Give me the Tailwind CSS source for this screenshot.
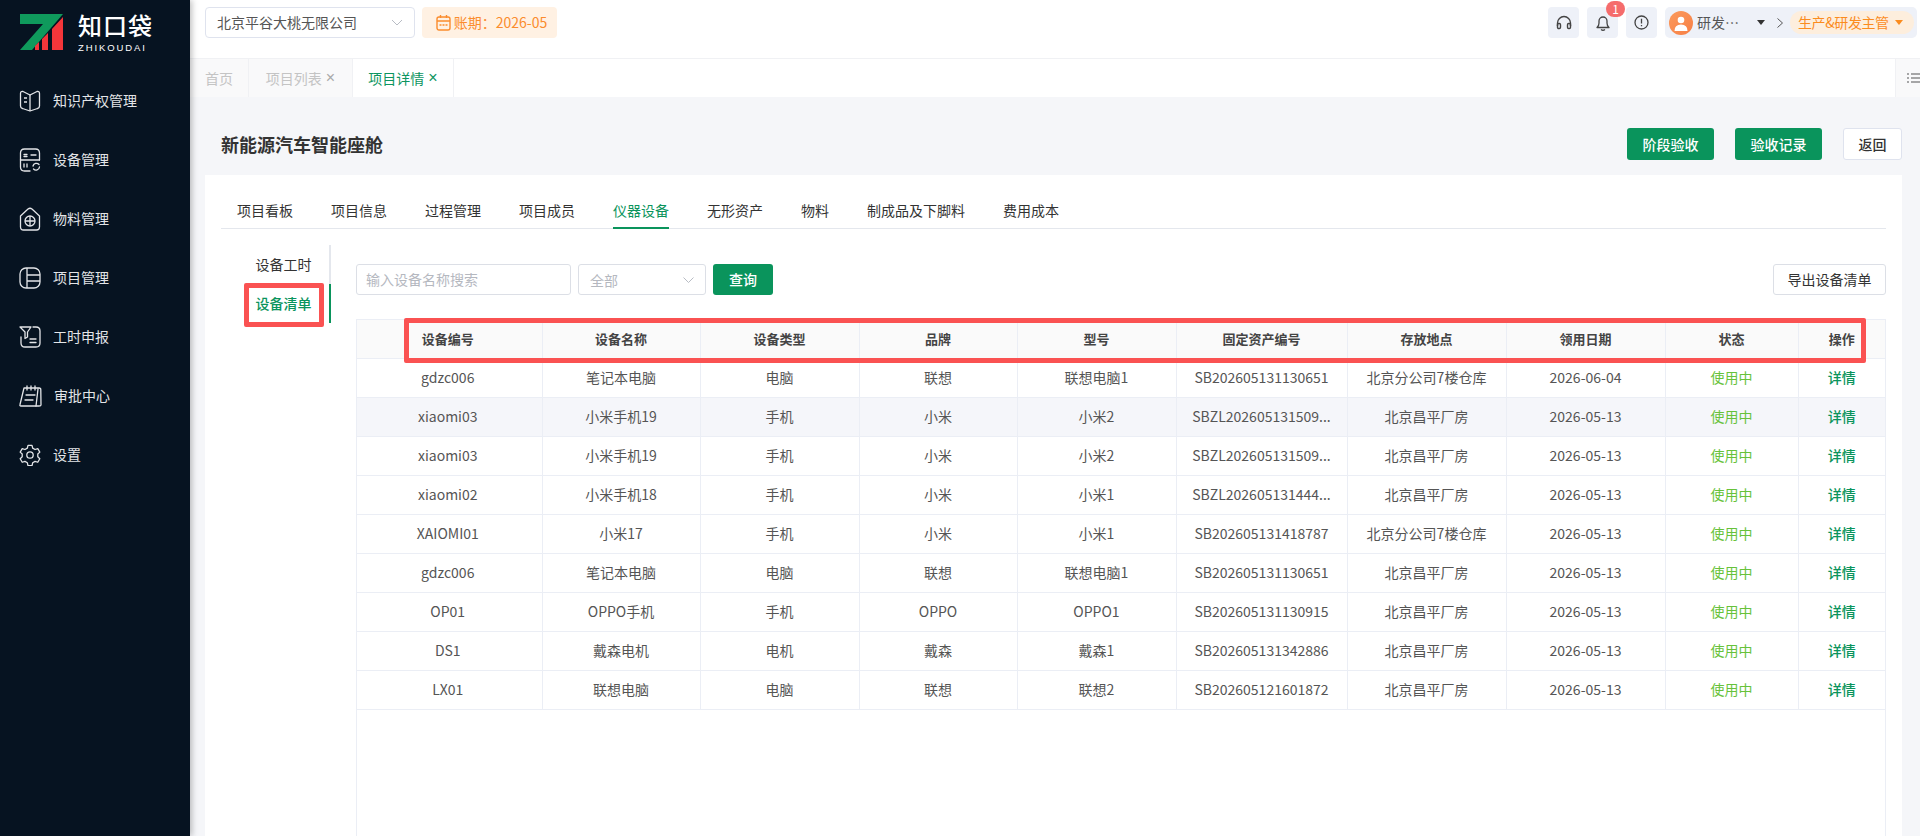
<!DOCTYPE html>
<html lang="en">
<head>
    <meta charset="UTF-8">
    <title>项目详情</title>
    <script src="https://cdn.jsdelivr.net/npm/@tailwindcss/browser@4"></script>
</head>
<body class="h-[836px] w-[1920px] overflow-hidden bg-white font-['Noto_Sans_CJK_SC',sans-serif] text-[14px] text-[#333]">
<div class="relative flex h-full">
    <!-- sidebar -->
    <aside class="z-10 flex h-full w-[190px] shrink-0 flex-col bg-[#061321] text-[14px] text-[#e3e5e8] shadow-[2px_0_6px_rgba(0,0,0,0.25)]">
        <div class="flex h-[58px] items-start pl-[20px] pt-[7px]">
            <svg width="43" height="36" viewBox="0 0 43 36" class="mt-[7px] shrink-0">
                <path d="M0 0H43L12 36H0L23 10H0Z" fill="#0f9a5c"/>
                <path d="M15 36V32L19 28V36ZM22 36V25L28 19V36ZM32 36V15L43 3V36Z" fill="#f4363a"/>
            </svg>
            <div class="ml-[15px] flex flex-col">
                <span class="h-[35px] text-[24px] leading-[35px] font-medium tracking-[1px] text-white">知口袋</span>
                <span class="text-[9.5px] leading-[11px] tracking-[1.9px] font-['Liberation_Sans'] text-white">ZHIKOUDAI</span>
            </div>
        </div>
        <nav class="mt-[13px] flex flex-col">
            <a class="flex h-[59px] items-center gap-[12px] pl-[19px]">
                <svg width="22" height="22" viewBox="0 0 22 22" fill="none" stroke="currentColor" stroke-width="1.3" stroke-linejoin="round"><path d="M11 5 4 1.500Q1.500 1 1.500 3.500V16Q1.500 18 3.500 18.500L11 21L18.500 18.500Q20.500 18 20.500 16V3.500Q20.500 1 18 1.500Z"/><path d="M11 5V21M5 8H8M5 12H8"/></svg>
                <span>知识产权管理</span>
            </a>
            <a class="flex h-[59px] items-center gap-[12px] pl-[19px]">
                <svg width="22" height="24" viewBox="0 0 22 24" fill="none" stroke="currentColor" stroke-width="1.3" stroke-linecap="round"><path d="M20.500 12V5Q20.500 1 16.500 1H5.500Q1.500 1 1.500 5V19Q1.500 23 5.500 23H11"/><path d="M1.500 12H20.500M5 6.500H8M5 8.500H8M12 7H17M5 16V19M8 16V19"/><path d="M14 18A3.500 3.500 0 0 1 20 16.500M20.500 19A3.500 3.500 0 0 1 14.500 21"/></svg>
                <span>设备管理</span>
            </a>
            <a class="flex h-[59px] items-center gap-[12px] pl-[19px]">
                <svg width="22" height="24" viewBox="0 0 22 24" fill="none" stroke="currentColor" stroke-width="1.3"><path d="M1.500 9 9 2Q11 .5 13 2L20.500 9V20Q20.500 23 17.500 23H4.500Q1.500 23 1.500 20Z"/><circle cx="11" cy="14" r="5"/><path d="M6 14H16M11 9V19"/></svg>
                <span>物料管理</span>
            </a>
            <a class="flex h-[59px] items-center gap-[12px] pl-[19px]">
                <svg width="22" height="22" viewBox="0 0 22 22" fill="none" stroke="currentColor" stroke-width="1.3"><rect x="1" y="1" width="20" height="20" rx="6"/><path d="M8 1V21M8 8H21M8 14H21"/></svg>
                <span>项目管理</span>
            </a>
            <a class="flex h-[59px] items-center gap-[12px] pl-[19px]">
                <svg width="22" height="22" viewBox="0 0 22 22" fill="none" stroke="currentColor" stroke-width="1.3" stroke-linecap="round" stroke-linejoin="round"><path d="M14 1H17Q21 1 21 5V17Q21 21 17 21H6Q2 21 2 17V11"/><path d="M1 1H12L8.500 6V11L6 12.500V6Z"/><path d="M11 13H17M11 16.500H17"/></svg>
                <span>工时申报</span>
            </a>
            <a class="flex h-[59px] items-center gap-[12px] pl-[19px]">
                <svg width="23" height="22" viewBox="0 0 23 22" fill="none" stroke="currentColor" stroke-width="1.3" stroke-linecap="round" stroke-linejoin="round"><path d="M5 3H20Q22 3 21.800 5L22 20Q22 21 20 21H2Q.5 21 1 19.500Z"/><path d="M19 4 17 21M8 1V5M12 1V5M16 1V5M7 10H16M6 15H14"/></svg>
                <span>审批中心</span>
            </a>
            <a class="flex h-[59px] items-center gap-[12px] pl-[19px]">
                <svg width="22" height="22" viewBox="0 0 24 24" fill="none" stroke="currentColor" stroke-width="1.400" stroke-linejoin="round"><circle cx="12" cy="12" r="3.500"/><path d="M9.800 1.500h4.400l.7 3 2.600 1.500 3-.9 2.200 3.800-2.200 2.100v3l2.200 2.100-2.200 3.800-3-.9-2.600 1.500-.7 3H9.800l-.7-3-2.600-1.500-3 .9-2.200-3.800 2.200-2.100v-3L1.300 8.900l2.200-3.800 3 .9 2.600-1.500z"/></svg>
                <span>设置</span>
            </a>
        </nav>
    </aside>

    <main class="flex h-full min-w-0 flex-1 flex-col">
        <!-- top bar -->
        <header class="flex h-[58px] shrink-0 items-start pl-[15px] pr-[3px] pt-[7px]">
            <div class="flex h-[31px] w-[210px] items-center justify-between rounded-[4px] border border-[#dfe3ee] pl-[11px] pr-[11px] text-[14px] text-[#555]">
                <span>北京平谷大桃无限公司</span>
                <svg width="12" height="7" viewBox="0 0 12 7" fill="none" stroke="#b8bcc4"><path d="M1 1l5 5 5-5"/></svg>
            </div>
            <div class="ml-[7px] flex h-[31px] w-[135px] items-center justify-center gap-[3px] rounded-[4px] bg-[#fff1e3] pl-[4px] text-[14px] text-[#fb8c2d]">
                <svg width="15" height="17" viewBox="0 0 15 17" fill="none" stroke="currentColor" stroke-width="1.400"><rect x="1" y="3" width="13" height="13" rx="2"/><path d="M1 7H14M4.500 1V4M10.500 1V4M3.500 11H5.500M6.500 11H8.500M9.500 11H11.500"/></svg>
                <span class="whitespace-nowrap">账期：2026-05</span>
            </div>
            <div class="ml-auto flex items-center gap-[8px]">
                <button class="flex size-[31px] items-center justify-center rounded-[4px] bg-[#eef1f8]">
                    <svg width="16" height="15" viewBox="0 0 16 15" fill="none" stroke="#444" stroke-width="1.400"><path d="M1.500 11V8A6.500 6.500 0 0 1 14.500 8V11"/><rect x="1.500" y="8.500" width="3" height="5" rx="1.200"/><rect x="11.500" y="8.500" width="3" height="5" rx="1.200"/></svg>
                </button>
                <button class="relative flex size-[31px] items-center justify-center rounded-[4px] bg-[#eef1f8]">
                    <svg width="14" height="16" viewBox="0 0 14 16" fill="none" stroke="#444" stroke-width="1.300" stroke-linejoin="round"><path d="M1 12.500Q3 11 3 8V6A4 4 0 0 1 11 6V8Q11 11 13 12.500Z"/><path d="M5 14.500Q7 16 9 14.500"/></svg>
                    <span class="absolute top-[-6px] right-[-7px] flex h-[16px] w-[19px] items-center justify-center rounded-full bg-[#f56c6c] text-[12px] text-white">1</span>
                </button>
                <button class="flex size-[31px] items-center justify-center rounded-[4px] bg-[#eef1f8]">
                    <svg width="15" height="15" viewBox="0 0 15 15" fill="none" stroke="#444" stroke-width="1.300"><circle cx="7.500" cy="7.500" r="6.500"/><path d="M7.500 3.800V8.500M7.500 10V11.200"/></svg>
                </button>
                <div class="flex h-[31px] w-[252px] items-center rounded-[5px] bg-[#eef1f8] pl-[4px]">
                    <span class="flex size-[24px] shrink-0 items-center justify-center overflow-hidden rounded-full bg-gradient-to-br from-[#fb9a5c] to-[#f77f45]">
                        <svg width="16" height="16" viewBox="0 0 16 16" fill="#fff"><circle cx="8" cy="5" r="3.300"/><path d="M1.500 16Q1.500 9.500 8 9.500T14.500 16Z"/></svg>
                    </span>
                    <span class="ml-[4px] w-[45px] shrink-0 whitespace-nowrap text-[14px] text-[#555]">研发…</span>
                    <svg class="ml-[15px] shrink-0" width="8" height="5" viewBox="0 0 8 5" fill="#333"><path d="M0 0H8L4 5Z"/></svg>
                    <svg class="ml-[12px] shrink-0" width="6" height="10" viewBox="0 0 6 10" fill="none" stroke="#555"><path d="M.5.5l5 4.500-5 4.500"/></svg>
                    <div class="ml-[7px] flex h-[23px] w-[124px] shrink-0 items-center gap-[6px] rounded-full bg-[#fdeedd] pl-[8px] text-[14px] text-[#fb8c1e]">
                        <span class="whitespace-nowrap tracking-[-0.4px]">生产&amp;研发主管</span>
                        <svg width="8" height="5" viewBox="0 0 8 5" fill="#fb8c1e"><path d="M0 0H8L4 5Z"/></svg>
                    </div>
                </div>
            </div>
        </header>

        <!-- open page tabs -->
        <div class="flex h-[39px] shrink-0 border-t border-[#f0f1f4] text-[14px]">
            <span class="flex w-[59px] items-center justify-center border-r border-[#f0f1f4] bg-[#f9f9fa] text-[#c4c4c4]">首页</span>
            <span class="flex w-[104px] items-center justify-center gap-[4px] border-r border-[#f0f1f4] bg-[#f9f9fa] text-[#c4c4c4]">项目列表 <span class="font-['Liberation_Sans'] text-[16px] text-[#aaa]">×</span></span>
            <span class="flex w-[101px] items-center justify-center gap-[4px] border-r border-[#f0f1f4] text-[#0c9560]">项目详情 <span class="font-['Liberation_Sans'] text-[16px]">×</span></span>
            <span class="ml-auto flex w-[25px] items-center overflow-hidden border-l border-[#f0f1f4] bg-[#f9f9fa] pl-[11px]">
                <svg class="shrink-0" width="16" height="12" viewBox="0 0 16 12" stroke="#555" stroke-width="1.200"><path d="M0 2H2M4 2H16M0 6H2M4 6H16M0 10H2M4 10H16"/></svg>
            </span>
        </div>

        <div class="flex min-h-0 flex-1 flex-col bg-[#f5f6f9]">
            <!-- page title -->
            <div class="flex h-[78px] shrink-0 items-start justify-between pl-[31px] pr-[18px] pt-[31px]">
                <h1 class="text-[18px] leading-[32px] font-bold text-[#333]">新能源汽车智能座舱</h1>
                <div class="flex items-center text-[14px]">
                    <button class="h-[32px] w-[87px] rounded-[3px] bg-[#0a945c] font-medium text-white">阶段验收</button>
                    <button class="ml-[21px] h-[32px] w-[87px] rounded-[3px] bg-[#0a945c] font-medium text-white">验收记录</button>
                    <button class="ml-[21px] h-[32px] w-[59px] rounded-[3px] border border-[#dfe3ee] bg-white font-medium">返回</button>
                </div>
            </div>

            <!-- content card -->
            <section class="ml-[15px] mr-[18px] flex min-h-0 flex-1 flex-col bg-white px-[16px]">
                <div class="mt-[15px] flex h-[39px] shrink-0 gap-[38px] border-b border-[#e4e7ed] pl-[16px] text-[14px] leading-[41px]">
                    <span>项目看板</span>
                    <span>项目信息</span>
                    <span>过程管理</span>
                    <span>项目成员</span>
                    <span class="h-[39px] border-b-2 border-[#0a945c] text-[#0a945c]">仪器设备</span>
                    <span>无形资产</span>
                    <span>物料</span>
                    <span>制成品及下脚料</span>
                    <span>费用成本</span>
                </div>
                <div class="flex min-h-0 flex-1">
                    <!-- sub menu -->
                    <div class="mt-[16px] flex w-[110px] shrink-0 flex-col items-end text-[14px]">
                        <span class="flex h-[39px] w-[96px] items-center justify-center border-r-2 border-[#e4e7ed] pl-[3px]">设备工时</span>
                        <span class="flex h-[39px] w-[96px] items-center justify-center border-r-2 border-[#0a945c] pl-[3px] font-medium text-[#0a945c]">设备清单</span>
                    </div>
                    <div class="ml-[25px] flex min-w-0 flex-1 flex-col">
                        <div class="mt-[35px] flex h-[31px] shrink-0 items-center">
                            <div class="flex h-[31px] w-[215px] items-center rounded-[3px] border border-[#dcdfe6] pl-[9px] text-[14px] text-[#b5b8bf]">输入设备名称搜索</div>
                            <div class="ml-[7px] flex h-[31px] w-[128px] items-center justify-between rounded-[3px] border border-[#dcdfe6] pl-[11px] pr-[11px] text-[14px] text-[#b5b8bf]">
                                <span class="mt-[2px]">全部</span>
                                <svg width="11" height="6" viewBox="0 0 11 6" fill="none" stroke="#b8bcc4"><path d="M.5.5l5 5 5-5"/></svg>
                            </div>
                            <button class="ml-[7px] h-[31px] w-[60px] rounded-[3px] bg-[#0a945c] font-medium text-white">查询</button>
                            <button class="ml-auto h-[31px] w-[113px] rounded-[3px] border border-[#dcdfe6] text-[14px]">导出设备清单</button>
                        </div>
                        <div class="mt-[24px] min-h-0 flex-1 border border-b-0 border-[#ebeef5]">
                            <table class="w-full table-fixed border-collapse text-center text-[14px] text-[#555]">
                                <colgroup>
                                    <col class="w-[185px]"><col class="w-[158px]"><col class="w-[159px]"><col class="w-[158px]"><col class="w-[159px]"><col class="w-[171px]"><col class="w-[159px]"><col class="w-[159px]"><col class="w-[133px]"><col>
                                </colgroup>
                                <thead>
                                    <tr class="h-[38px] border-b border-[#ebeef5] bg-[#fafafa] text-[13px] text-[#444]">
                                        <th class="border-r border-[#ebeef5] pr-[3px] font-bold">设备编号</th>
                                        <th class="border-r border-[#ebeef5] font-bold">设备名称</th>
                                        <th class="border-r border-[#ebeef5] font-bold">设备类型</th>
                                        <th class="border-r border-[#ebeef5] font-bold">品牌</th>
                                        <th class="border-r border-[#ebeef5] font-bold">型号</th>
                                        <th class="border-r border-[#ebeef5] font-bold">固定资产编号</th>
                                        <th class="border-r border-[#ebeef5] font-bold">存放地点</th>
                                        <th class="border-r border-[#ebeef5] font-bold">领用日期</th>
                                        <th class="border-r border-[#ebeef5] font-bold">状态</th>
                                        <th class="font-bold">操作</th>
                                    </tr>
                                </thead>
                                <tbody id="rows"></tbody>
                            </table>
                        </div>
                    </div>
                </div>
            </section>
        </div>
    </main>

    <!-- red annotation boxes drawn over the screenshot -->
    <div class="absolute top-[283px] left-[244px] h-[44px] w-[80px] rounded-[2px] border-[5px] border-[#fa5252]"></div>
    <div class="absolute top-[318px] left-[404px] h-[45px] w-[1462px] rounded-[2px] border-[5px] border-[#fa5252]"></div>
</div>

<script>
    const rows = [
        ['gdzc006', '笔记本电脑', '电脑', '联想', '联想电脑1', 'SB202605131130651', '北京分公司7楼仓库', '2026-06-04'],
        ['xiaomi03', '小米手机19', '手机', '小米', '小米2', 'SBZL202605131509...', '北京昌平厂房', '2026-05-13'],
        ['xiaomi03', '小米手机19', '手机', '小米', '小米2', 'SBZL202605131509...', '北京昌平厂房', '2026-05-13'],
        ['xiaomi02', '小米手机18', '手机', '小米', '小米1', 'SBZL202605131444...', '北京昌平厂房', '2026-05-13'],
        ['XAIOMI01', '小米17', '手机', '小米', '小米1', 'SB202605131418787', '北京分公司7楼仓库', '2026-05-13'],
        ['gdzc006', '笔记本电脑', '电脑', '联想', '联想电脑1', 'SB202605131130651', '北京昌平厂房', '2026-05-13'],
        ['OP01', 'OPPO手机', '手机', 'OPPO', 'OPPO1', 'SB202605131130915', '北京昌平厂房', '2026-05-13'],
        ['DS1', '戴森电机', '电机', '戴森', '戴森1', 'SB202605131342886', '北京昌平厂房', '2026-05-13'],
        ['LX01', '联想电脑', '电脑', '联想', '联想2', 'SB202605121601872', '北京昌平厂房', '2026-05-13'],
    ];

    const tbody = document.getElementById('rows');
    rows.forEach((row, i) => {
        const tr = document.createElement('tr');
        tr.className = i === 1 ? 'h-[39px] border-b border-[#ebeef5] bg-[#f5f6fa]' : 'h-[39px] border-b border-[#ebeef5]';
        tr.innerHTML = row.map((text, col) => `<td class="${col === 0 ? 'border-r border-[#ebeef5] pr-[3px]' : 'border-r border-[#ebeef5]'}">${text}</td>`).join('')
            + '<td class="border-r border-[#ebeef5] text-[#67c23a]">使用中</td>'
            + '<td class="font-medium text-[#0a945c]">详情</td>';
        tbody.appendChild(tr);
    });
</script>
</body>
</html>
